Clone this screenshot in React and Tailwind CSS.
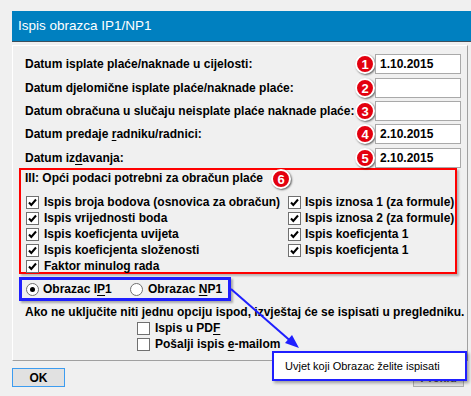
import React from "react";

const Badge = ({ n }) => (
  <div className="w-[20px] h-[20px] shrink-0 rounded-full bg-[#e3000f] border-2 border-white shadow-[1px_1px_2px_rgba(0,0,0,0.6)] flex items-center justify-center text-white text-[13px] font-bold leading-none">
    {n}
  </div>
);

const Check = ({ checked }) => (
  <div className="w-[13px] h-[13px] shrink-0 border border-[#707070] bg-white flex items-center justify-center">
    {checked && (
      <svg width="11" height="11" viewBox="0 0 11 11">
        <path d="M2 5.5 L4.3 8 L9 2.5" fill="none" stroke="#000" strokeWidth="2" />
      </svg>
    )}
  </div>
);

const Radio = ({ checked }) => (
  <div className="w-[13px] h-[13px] shrink-0 rounded-full border border-[#707070] bg-white flex items-center justify-center">
    {checked && <div className="w-[5px] h-[5px] rounded-full bg-black" />}
  </div>
);

const dates = [
  { label: "Datum isplate plaće/naknade u cijelosti:", n: 1, v: "1.10.2015", mt: "" },
  { label: "Datum djelomične isplate plaće/naknade plaće:", n: 2, v: "", mt: "mt-[4px]" },
  { label: "Datum obračuna u slučaju neisplate plaće naknade plaće:", n: 3, v: "", mt: "mt-[3px]" },
  {
    label: (
      <>
        Datum predaje <u className="underline-offset-2">r</u>adniku/radnici:
      </>
    ),
    n: 4,
    v: "2.10.2015",
    mt: "mt-[3px]",
  },
  {
    label: (
      <>
        Datum iz<u className="underline-offset-2">d</u>avanja:
      </>
    ),
    n: 5,
    v: "2.10.2015",
    mt: "mt-[4px]",
  },
];

const left = [
  "Ispis broja bodova (osnovica za obračun)",
  "Ispis vrijednosti boda",
  "Ispis koeficjenta uvijeta",
  "Ispis koeficjenta složenosti",
  "Faktor minulog rada",
];

const right = [
  "Ispis iznosa 1 (za formule)",
  "Ispis iznosa 2 (za formule)",
  "Ispis koeficjenta 1",
  "Ispis koeficjenta 1",
];

export default function App() {
  return (
    <div className="relative w-[471px] h-[396px] overflow-hidden bg-[#f0f0f0] pt-[11px] pl-[12px] font-['Liberation_Sans',Arial,sans-serif] text-black">
      {/* title bar */}
      <div className="h-[31px] bg-[#0080c0] border-b border-[#3d4f5c] flex items-center pl-[6px] text-white text-[13.5px]">
        Ispis obrazca IP1/NP1
      </div>

      {/* main panel */}
      <div className="mt-[3px] w-[456px] h-[316px] border border-t-white border-l-white border-r-[#a0a0a0] border-b-[#a0a0a0] pt-[8px] pl-[6px] pr-[6px] text-[12px] font-bold">
        {dates.map((d) => (
          <div key={d.n} className={`flex items-center h-[20px] pl-[6px] ${d.mt}`}>
            <div className="flex-1 whitespace-nowrap leading-[16px]">{d.label}</div>
            <Badge n={d.n} />
            <div className="w-[86px] h-[20px] border border-[#a9a9a9] bg-white pl-[4px] flex items-center leading-none">
              {d.v}
            </div>
          </div>
        ))}

        {/* section III */}
        <div className="w-[438px] h-[106px] border-2 border-[#ff0000] shadow-[2px_2px_2px_rgba(0,0,0,0.25)] pl-[4px]">
          <div className="flex items-center h-[16px] whitespace-nowrap">
            <span>III: Opći podaci potrebni za obračun plaće</span>
            <div className="ml-[8px] mt-[2px]">
              <Badge n={6} />
            </div>
          </div>
          <div className="mt-[8px] pl-[1px] grid grid-cols-[262px_1fr]">
            <div className="flex flex-col">
              {left.map((t) => (
                <div key={t} className="flex items-center gap-[5px] h-[16px] whitespace-nowrap">
                  <Check checked />
                  <span>{t}</span>
                </div>
              ))}
            </div>
            <div className="flex flex-col">
              {right.map((t, i) => (
                <div key={i} className="flex items-center gap-[4px] h-[16px] whitespace-nowrap">
                  <Check checked />
                  <span>{t}</span>
                </div>
              ))}
            </div>
          </div>
        </div>

        {/* radio group */}
        <div className="mt-[3px] w-[212px] h-[24px] border-[3px] border-[#1f1fff] shadow-[2px_2px_2px_rgba(0,0,0,0.3)] flex items-center pl-[4px]">
          <div className="flex items-center gap-[4px] w-[104px] whitespace-nowrap">
            <Radio checked />
            <span>
              Obrazac I<u className="underline-offset-2">P</u>1
            </span>
          </div>
          <div className="flex items-center gap-[5px] whitespace-nowrap">
            <Radio />
            <span>
              Obrazac <u className="underline-offset-2">N</u>P1
            </span>
          </div>
        </div>

        <div className="mt-[3px] pl-[6px] leading-[16px] whitespace-nowrap">
          Ako ne uključite niti jednu opciju ispod, izvještaj će se ispisati u pregledniku.
        </div>
        <div className="ml-[118px] flex items-center gap-[5px] h-[16px] whitespace-nowrap">
          <Check />
          <span>
            Ispis u PD<u className="underline-offset-2">F</u>
          </span>
        </div>
        <div className="ml-[118px] flex items-center gap-[5px] h-[16px] whitespace-nowrap">
          <Check />
          <span>
            Pošalji ispis <u className="underline-offset-2">e</u>-mailom
          </span>
        </div>
      </div>

      {/* footer buttons */}
      <div className="mt-[7px] flex justify-between pr-[7px] text-[12px] font-bold">
        <div className="w-[53px] h-[19px] border border-[#3c9cf0] bg-[#e1e1e1] flex items-center justify-center">
          OK
        </div>
        <div className="w-[51px] h-[19px] border border-[#adadad] bg-[#e1e1e1] flex items-center justify-center text-[#555]">
          Prekid
        </div>
      </div>

      {/* annotation arrow */}
      <svg className="absolute left-0 top-0 pointer-events-none" width="471" height="396">
        <line x1="231" y1="289" x2="294" y2="344" stroke="#1f1fff" strokeWidth="2" />
        <path d="M299 348 L285 343 L292 335 Z" fill="#1f1fff" />
      </svg>

      {/* tooltip */}
      <div className="absolute left-[272px] top-[351px] w-[195px] h-[30px] bg-white border-2 border-[#1f1fff] shadow-[2px_2px_3px_rgba(0,0,0,0.35)] flex items-center pl-[11px] text-[11px] whitespace-nowrap">
        Uvjet koji Obrazac želite ispisati
      </div>
    </div>
  );
}
